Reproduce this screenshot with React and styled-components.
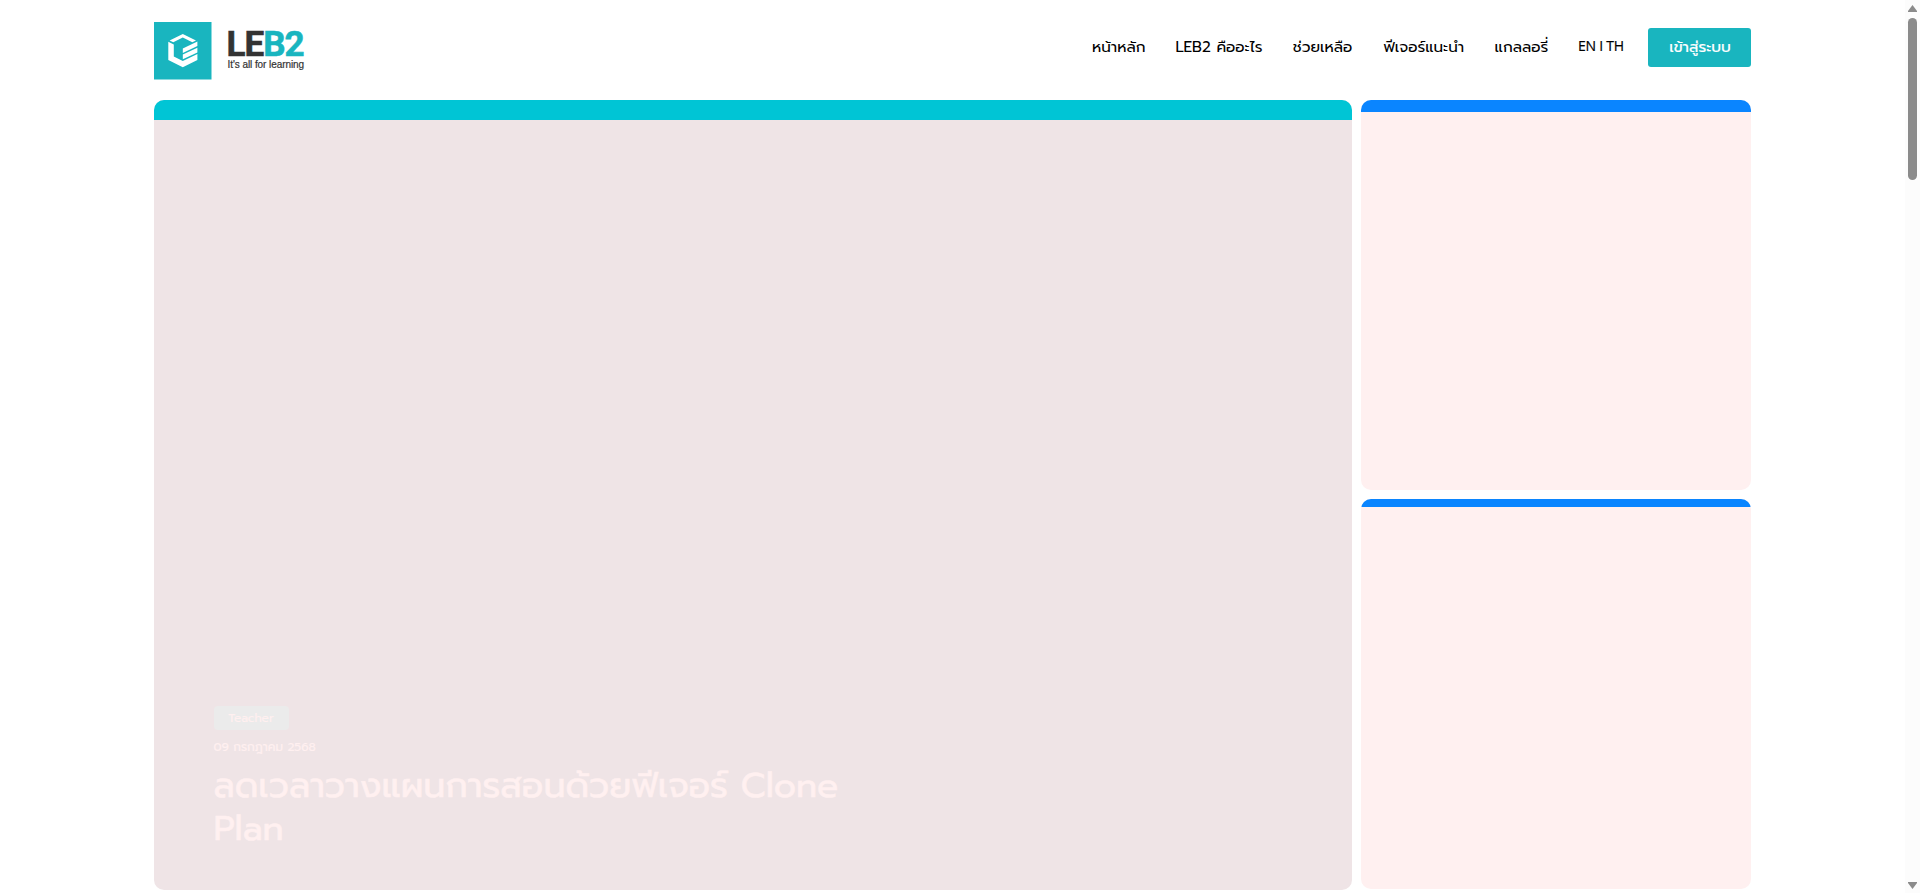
import React from "react";
import styled, { createGlobalStyle } from "styled-components";

const Global = createGlobalStyle`
  * { box-sizing: border-box; }
  body {
    margin: 0;
    height: 893px;
    overflow: hidden;
    background: #fff;
    color: #000;
    font-family: Prompt, "Noto Sans Thai", "Noto Sans", "Liberation Sans", sans-serif;
  }
`;

const Window = styled.div`
  display: flex;
  height: 893px;
`;

const Page = styled.div`
  flex: 1;
  padding: 0 154px;
`;

const Header = styled.header`
  display: flex;
  align-items: flex-start;
  justify-content: space-between;
  height: 100px;
`;

const Brand = styled.a`
  display: flex;
  padding-top: 22px;
`;

const LogoMark = styled.svg`
  width: 58px;
  height: 58px;
`;

const Wordmark = styled.div`
  display: flex;
  flex-direction: column;
  margin: 2px 0 0 14.5px;
  color: #333;
`;

const BrandName = styled.span`
  height: 35px;
  font-family: Roboto, "Liberation Sans", Arial, sans-serif;
  font-size: 35px;
  line-height: 42px;
  font-weight: 700;
  letter-spacing: -1px;
  -webkit-text-stroke: 0.6px currentColor;
`;

const Accent = styled.span`
  color: #19b5bf;
`;

const Tagline = styled.span`
  padding-left: 1px;
  font-family: "Liberation Sans", Arial, sans-serif;
  font-size: 10px;
  line-height: 12px;
  letter-spacing: -0.07px;
  white-space: nowrap;
  -webkit-text-stroke: 0.2px #333;
`;

const Nav = styled.nav`
  display: flex;
  padding-top: 28px;
`;

const NavItem = styled.a`
  width: ${(p) => p.$width}px;
  margin-right: 30.4px;
  font-size: 15.2px;
  line-height: 38px;
  white-space: nowrap;
`;

const Language = styled.div`
  width: 46px;
  margin-right: 24px;
  font-family: "Open Sans", sans-serif;
  font-size: 14px;
  line-height: 36px;
  letter-spacing: -0.25px;
  white-space: nowrap;
  -webkit-text-stroke: 0.2px #000;
`;

const LoginButton = styled.button`
  width: 103px;
  height: 39px;
  padding: 0 0 1px 1px;
  border: 0;
  border-radius: 3px;
  background: #19b5bf;
  color: #fff;
  font: 400 15.2px/38px Prompt, "Noto Sans Thai", "Noto Sans", sans-serif;
  white-space: nowrap;
  -webkit-text-stroke: 0.2px #fff;
`;

const Cards = styled.main`
  display: grid;
  grid-template-columns: 1198px 390px;
  column-gap: 9px;
`;

const Hero = styled.section`
  display: flex;
  flex-direction: column;
  height: 790px;
  overflow: hidden;
  border-radius: 10px;
  background: #efe4e6;
`;

const Bar = styled.div`
  flex: none;
  height: ${(p) => p.$height}px;
  background: ${(p) => p.$color};
`;

const HeroText = styled.div`
  margin-top: auto;
  padding: 0 60px 40px 59.5px;
  color: #fff0f0;
  -webkit-text-stroke: 0.2px #fff0f0;
`;

const Tag = styled.span`
  display: block;
  width: 75px;
  height: 24px;
  border-radius: 4px;
  background: #ebebeb;
  font-size: 12px;
  line-height: 24px;
  text-align: center;
`;

const DateLine = styled.div`
  margin: 5px 0;
  font-size: 12px;
  line-height: 24px;
  white-space: nowrap;
`;

const Title = styled.h1`
  margin: 0;
  font-size: 35px;
  line-height: 43px;
  font-weight: 400;
  white-space: nowrap;
  -webkit-text-stroke: 0.6px #fff0f0;
`;

const Side = styled.aside`
  display: flex;
  flex-direction: column;
  gap: 9px;
`;

const SideCard = styled.section`
  height: 390px;
  overflow: hidden;
  border-radius: 10px;
  background: #fff0f0;
`;

const Scrollbar = styled.div`
  display: flex;
  flex-direction: column;
  align-items: center;
  width: 15px;
  padding-top: 5px;
  background: #fcfcfc;
`;

const Thumb = styled.div`
  width: 9px;
  height: 162px;
  margin: 6px 0 auto;
  border-radius: 5px;
  background: #8b8b8b;
`;

const Arrow = styled.svg`
  width: 9px;
  height: 7px;
  margin-bottom: ${(p) => p.$bottom || 0}px;
`;

const links = [
  ["หน้าหลัก", 53],
  ["LEB2 คืออะไร", 87],
  ["ช่วยเหลือ", 60],
  ["ฟีเจอร์แนะนำ", 81],
  ["แกลลอรี่", 53],
];

export default function App() {
  return (
    <Window>
      <Global />
      <Page>
        <Header>
          <Brand>
            <LogoMark viewBox="0 0 58 58">
              <rect width="57.5" height="57.5" fill="#19b5bf" />
              <g fill="#fff">
                <path d="M15.6 18.6 L28.8 12 L42 18.6 L38.3 20.2 L28.8 15.5 L19.3 20.2 Z" />
                <path d="M14.3 19.8 L19.8 22.4 V34.6 L28.8 38.9 L43.4 32 V38 L28.8 45.2 L14.3 38 Z" />
                <path d="M43.4 19.4 V24 L28.8 31 V26.4 Z" />
                <path d="M43.4 25.7 V30.4 L28.8 37.3 V32.6 Z" />
              </g>
            </LogoMark>
            <Wordmark>
              <BrandName>LE<Accent>B2</Accent></BrandName>
              <Tagline>It's all for learning</Tagline>
            </Wordmark>
          </Brand>
          <Nav>
            {links.map(([label, width]) => (
              <NavItem key={label} $width={width}>{label}</NavItem>
            ))}
            <Language>EN I TH</Language>
            <LoginButton>เข้าสู่ระบบ</LoginButton>
          </Nav>
        </Header>
        <Cards>
          <Hero>
            <Bar $height={20} $color="#00c5d5" />
            <HeroText>
              <Tag>Teacher</Tag>
              <DateLine>09 กรกฎาคม 2568</DateLine>
              <Title>ลดเวลาวางแผนการสอนด้วยฟีเจอร์ Clone<br />Plan</Title>
            </HeroText>
          </Hero>
          <Side>
            <SideCard><Bar $height={11.6} $color="#0a85ff" /></SideCard>
            <SideCard><Bar $height={7.6} $color="#0a85ff" /></SideCard>
          </Side>
        </Cards>
      </Page>
      <Scrollbar>
        <Arrow viewBox="0 0 9 7"><path d="M4.5 0 L9 6 V7 H0 V6 Z" fill="#8b8b8b" /></Arrow>
        <Thumb />
        <Arrow $bottom={4} viewBox="0 0 9 7"><path d="M4.5 7 L9 1 V0 H0 V1 Z" fill="#8b8b8b" /></Arrow>
      </Scrollbar>
    </Window>
  );
}
